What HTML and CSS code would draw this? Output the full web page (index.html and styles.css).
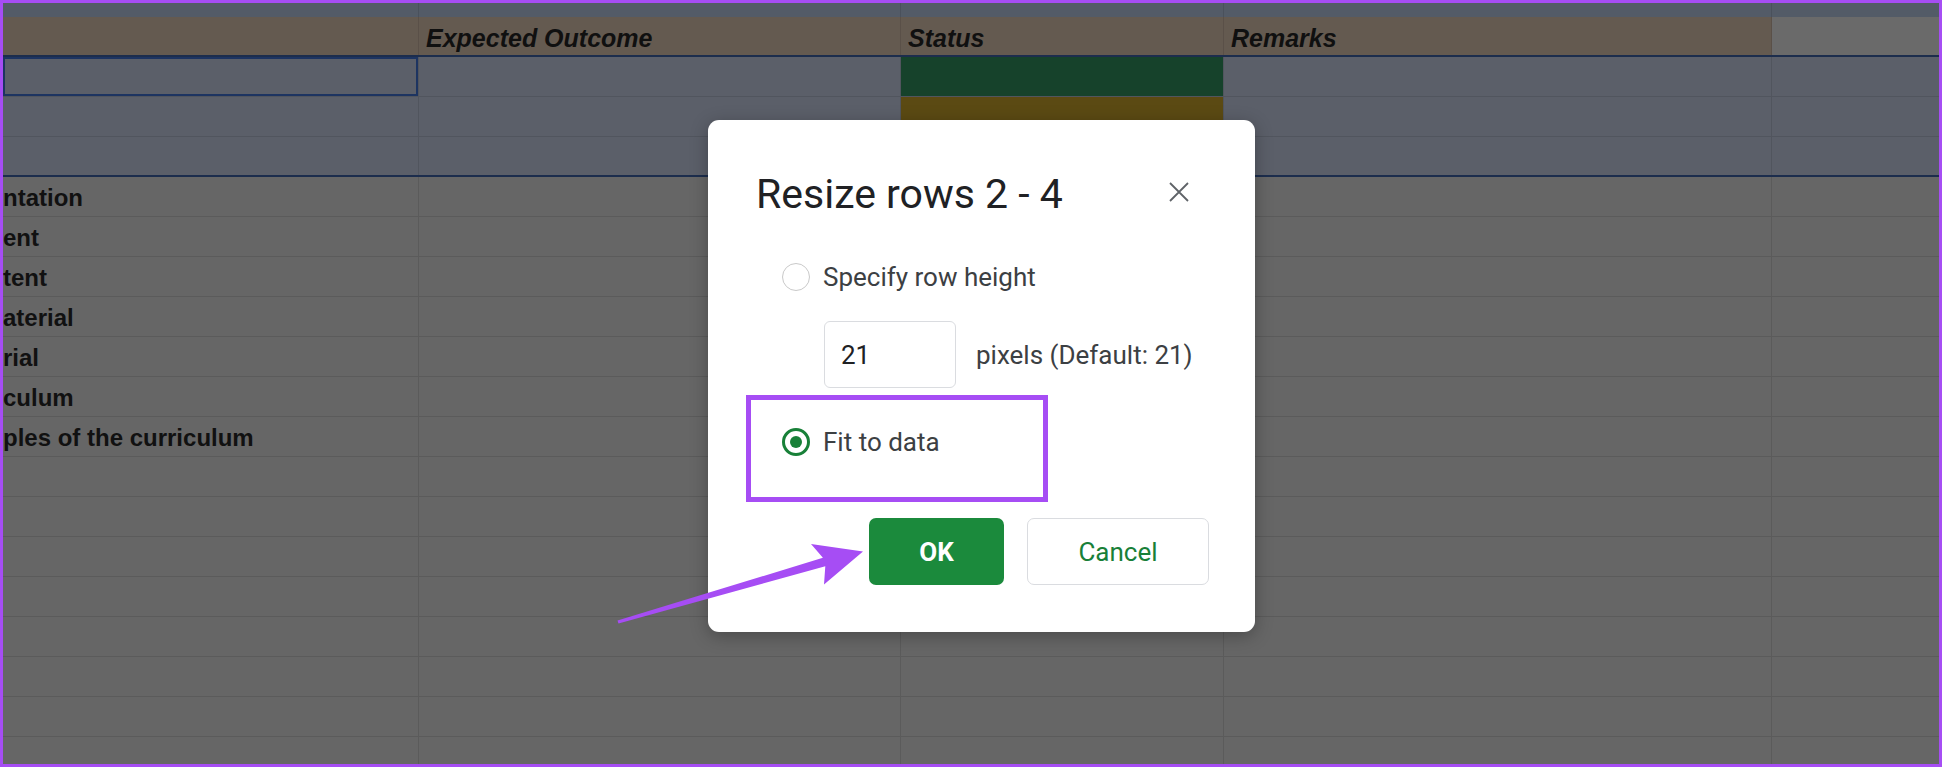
FILE: index.html
```html
<!DOCTYPE html>
<html>
<head>
<meta charset="utf-8">
<link rel="stylesheet" href="styles.css">
</head>
<body>
<div class="page">
  <div class="sheet">
    <div class="row strip"><div class="cell"></div><div class="cell"></div><div class="cell"></div><div class="cell"></div><div class="cell"></div></div>
    <div class="row head">
      <div class="cell"></div>
      <div class="cell"><span class="htxt">Expected Outcome</span></div>
      <div class="cell"><span class="htxt">Status</span></div>
      <div class="cell"><span class="htxt">Remarks</span></div>
      <div class="cell blank"></div>
    </div>
    <div class="row sel"><div class="cell active"></div><div class="cell"></div><div class="cell st-green"></div><div class="cell"></div><div class="cell"></div></div>
    <div class="row sel"><div class="cell"></div><div class="cell"></div><div class="cell st-olive"></div><div class="cell"></div><div class="cell"></div></div>
    <div class="row sel last"><div class="cell"></div><div class="cell"></div><div class="cell"></div><div class="cell"></div><div class="cell"></div></div>
    <div class="row"><div class="cell first"><span class="t">ntation</span></div><div class="cell"></div><div class="cell"></div><div class="cell"></div><div class="cell"></div></div>
    <div class="row"><div class="cell first"><span class="t">ent</span></div><div class="cell"></div><div class="cell"></div><div class="cell"></div><div class="cell"></div></div>
    <div class="row"><div class="cell first"><span class="t">tent</span></div><div class="cell"></div><div class="cell"></div><div class="cell"></div><div class="cell"></div></div>
    <div class="row"><div class="cell first"><span class="t">aterial</span></div><div class="cell"></div><div class="cell"></div><div class="cell"></div><div class="cell"></div></div>
    <div class="row"><div class="cell first"><span class="t">rial</span></div><div class="cell"></div><div class="cell"></div><div class="cell"></div><div class="cell"></div></div>
    <div class="row"><div class="cell first"><span class="t">culum</span></div><div class="cell"></div><div class="cell"></div><div class="cell"></div><div class="cell"></div></div>
    <div class="row"><div class="cell first"><span class="t">ples of the curriculum</span></div><div class="cell"></div><div class="cell"></div><div class="cell"></div><div class="cell"></div></div>
    <div class="row"><div class="cell"></div><div class="cell"></div><div class="cell"></div><div class="cell"></div><div class="cell"></div></div>
    <div class="row"><div class="cell"></div><div class="cell"></div><div class="cell"></div><div class="cell"></div><div class="cell"></div></div>
    <div class="row"><div class="cell"></div><div class="cell"></div><div class="cell"></div><div class="cell"></div><div class="cell"></div></div>
    <div class="row"><div class="cell"></div><div class="cell"></div><div class="cell"></div><div class="cell"></div><div class="cell"></div></div>
    <div class="row"><div class="cell"></div><div class="cell"></div><div class="cell"></div><div class="cell"></div><div class="cell"></div></div>
    <div class="row"><div class="cell"></div><div class="cell"></div><div class="cell"></div><div class="cell"></div><div class="cell"></div></div>
    <div class="row"><div class="cell"></div><div class="cell"></div><div class="cell"></div><div class="cell"></div><div class="cell"></div></div>
    <div class="row"><div class="cell"></div><div class="cell"></div><div class="cell"></div><div class="cell"></div><div class="cell"></div></div>
  </div>

  <div class="dialog">
    <div class="dlg-head">
      <span class="dlg-title">Resize rows 2 - 4</span>
      <svg class="close" width="24" height="24" viewBox="0 0 24 24"><path d="M3 3 L21 21 M21 3 L3 21" stroke="#5f6368" stroke-width="1.8" fill="none"/></svg>
    </div>
    <div class="opt opt1">
      <span class="radio"></span>
      <span class="opt-label">Specify row height</span>
    </div>
    <div class="px-row">
      <div class="px-input">21</div>
      <span class="opt-label">pixels (Default: 21)</span>
    </div>
    <div class="hl-box">
      <div class="opt">
        <span class="radio checked"><span class="dot"></span></span>
        <span class="opt-label">Fit to data</span>
      </div>
    </div>
    <div class="btns">
      <div class="btn ok">OK</div>
      <div class="btn cancel">Cancel</div>
    </div>
  </div>

  <svg class="arrow" width="1942" height="767" viewBox="0 0 1942 767">
    <polygon points="617.5,620.5 822.9,557.8 811,544 863,551.5 824,584.5 825.3,566.2 618.5,623.5" fill="#a64df4"/>
  </svg>
</div>
</body>
</html>
```

FILE: styles.css
```css
* { box-sizing: border-box; }
html, body { margin: 0; padding: 0; }
body { width: 1942px; height: 767px; overflow: hidden; background: #666; }

.page {
  position: relative;
  width: 1942px;
  height: 767px;
  border: 3px solid #a64df4;
  overflow: hidden;
  background: #666666;
}

.sheet { display: flex; flex-direction: column; }

.row {
  display: grid;
  grid-template-columns: 416px 482px 323px 548px 1fr;
  height: 40px;
  border-bottom: 1px solid #5b5b5b;
  background: #666666;
}
.cell {
  border-right: 1px solid #5b5b5b;
  overflow: hidden;
  white-space: nowrap;
  display: flex;
  align-items: flex-start;
}
.cell:last-child { border-right: none; }

.row.strip {
  height: 14px;
  background: #535b67;
  border-bottom: none;
}
.row.strip .cell { border-right-color: #4a515c; }

.row.head {
  height: 40px;
  background: #645a50;
  border-bottom: 2px solid #1c2d4d;
}
.row.head .cell { border-right-color: #5a5048; align-items: flex-end; padding: 0 0 2px 7px; }
.row.head .cell.blank { background: #6a6a6a; }
.htxt {
  font-family: "Liberation Sans", Arial, sans-serif;
  font-weight: 700;
  font-style: italic;
  font-size: 25px;
  line-height: 29px;
  color: #101010;
}

.row.sel { background: #5b5f69; border-bottom-color: #51555e; }
.row.sel .cell { border-right-color: #51555e; }
.row.sel.last { border-bottom: 2px solid #1c2d4d; }
.cell.active { box-shadow: inset 0 0 0 2px #1d3461; }
.cell.st-green { background: #16422b; }
.cell.st-olive { background: #5b4a13; }

.cell.first { padding-top: 7px; }
.t {
  font-family: "Liberation Sans", Arial, sans-serif;
  font-weight: 700;
  font-size: 24px;
  line-height: 28px;
  color: #111111;
}

/* dialog */
.dialog {
  position: absolute;
  left: 705px;
  top: 117px;
  width: 547px;
  height: 512px;
  background: #ffffff;
  border-radius: 11px;
  box-shadow: 0 4px 18px rgba(0,0,0,0.28);
  padding: 50px 0 0 48px;
  font-family: Roboto, "Noto Sans", sans-serif;
}
.dlg-head {
  display: flex;
  align-items: center;
  justify-content: space-between;
  height: 48px;
  padding-right: 64px;
}
.dlg-title {
  font-family: Roboto, "Open Sans", sans-serif;
  font-size: 41px;
  line-height: 48px;
  color: #202124;
  font-weight: 400;
}
.close { display: block; margin-top: -4px; }

.opt {
  display: flex;
  align-items: center;
  gap: 13px;
  height: 32px;
}
.opt1 { margin: 43px 0 0 26px; }
.opt-label {
  font-size: 26px;
  line-height: 32px;
  color: #3c4043;
}
.radio {
  width: 28px;
  height: 28px;
  border-radius: 50%;
  border: 1.5px solid #c9c9c9;
  display: flex;
  align-items: center;
  justify-content: center;
  flex: none;
}
.radio.checked { border: 3px solid #188038; }
.dot { width: 12px; height: 12px; border-radius: 50%; background: #188038; }

.px-row {
  display: flex;
  align-items: center;
  gap: 20px;
  margin: 28px 0 0 68px;
}
.px-input {
  width: 132px;
  height: 67px;
  border: 1px solid #dadce0;
  border-radius: 6px;
  padding-left: 16px;
  display: flex;
  align-items: center;
  font-size: 26px;
  color: #202124;
}

.hl-box {
  margin: 7px 0 0 -10px;
  width: 302px;
  height: 107px;
  border: 5px solid #a64df4;
  padding: 26px 0 0 31px;
}

.btns {
  display: flex;
  justify-content: flex-end;
  gap: 23px;
  margin-top: 16px;
  padding-right: 46px;
}
.btn {
  height: 67px;
  border-radius: 7px;
  display: flex;
  align-items: center;
  justify-content: center;
  font-size: 26px;
}
.btn.ok { width: 135px; background: #1b8a3c; color: #ffffff; font-weight: 700; }
.btn.cancel { width: 182px; border: 1px solid #dadce0; color: #188038; background: #fff; font-weight: 400; }

.arrow {
  position: absolute;
  left: -3px;
  top: -3px;
  pointer-events: none;
}
```
